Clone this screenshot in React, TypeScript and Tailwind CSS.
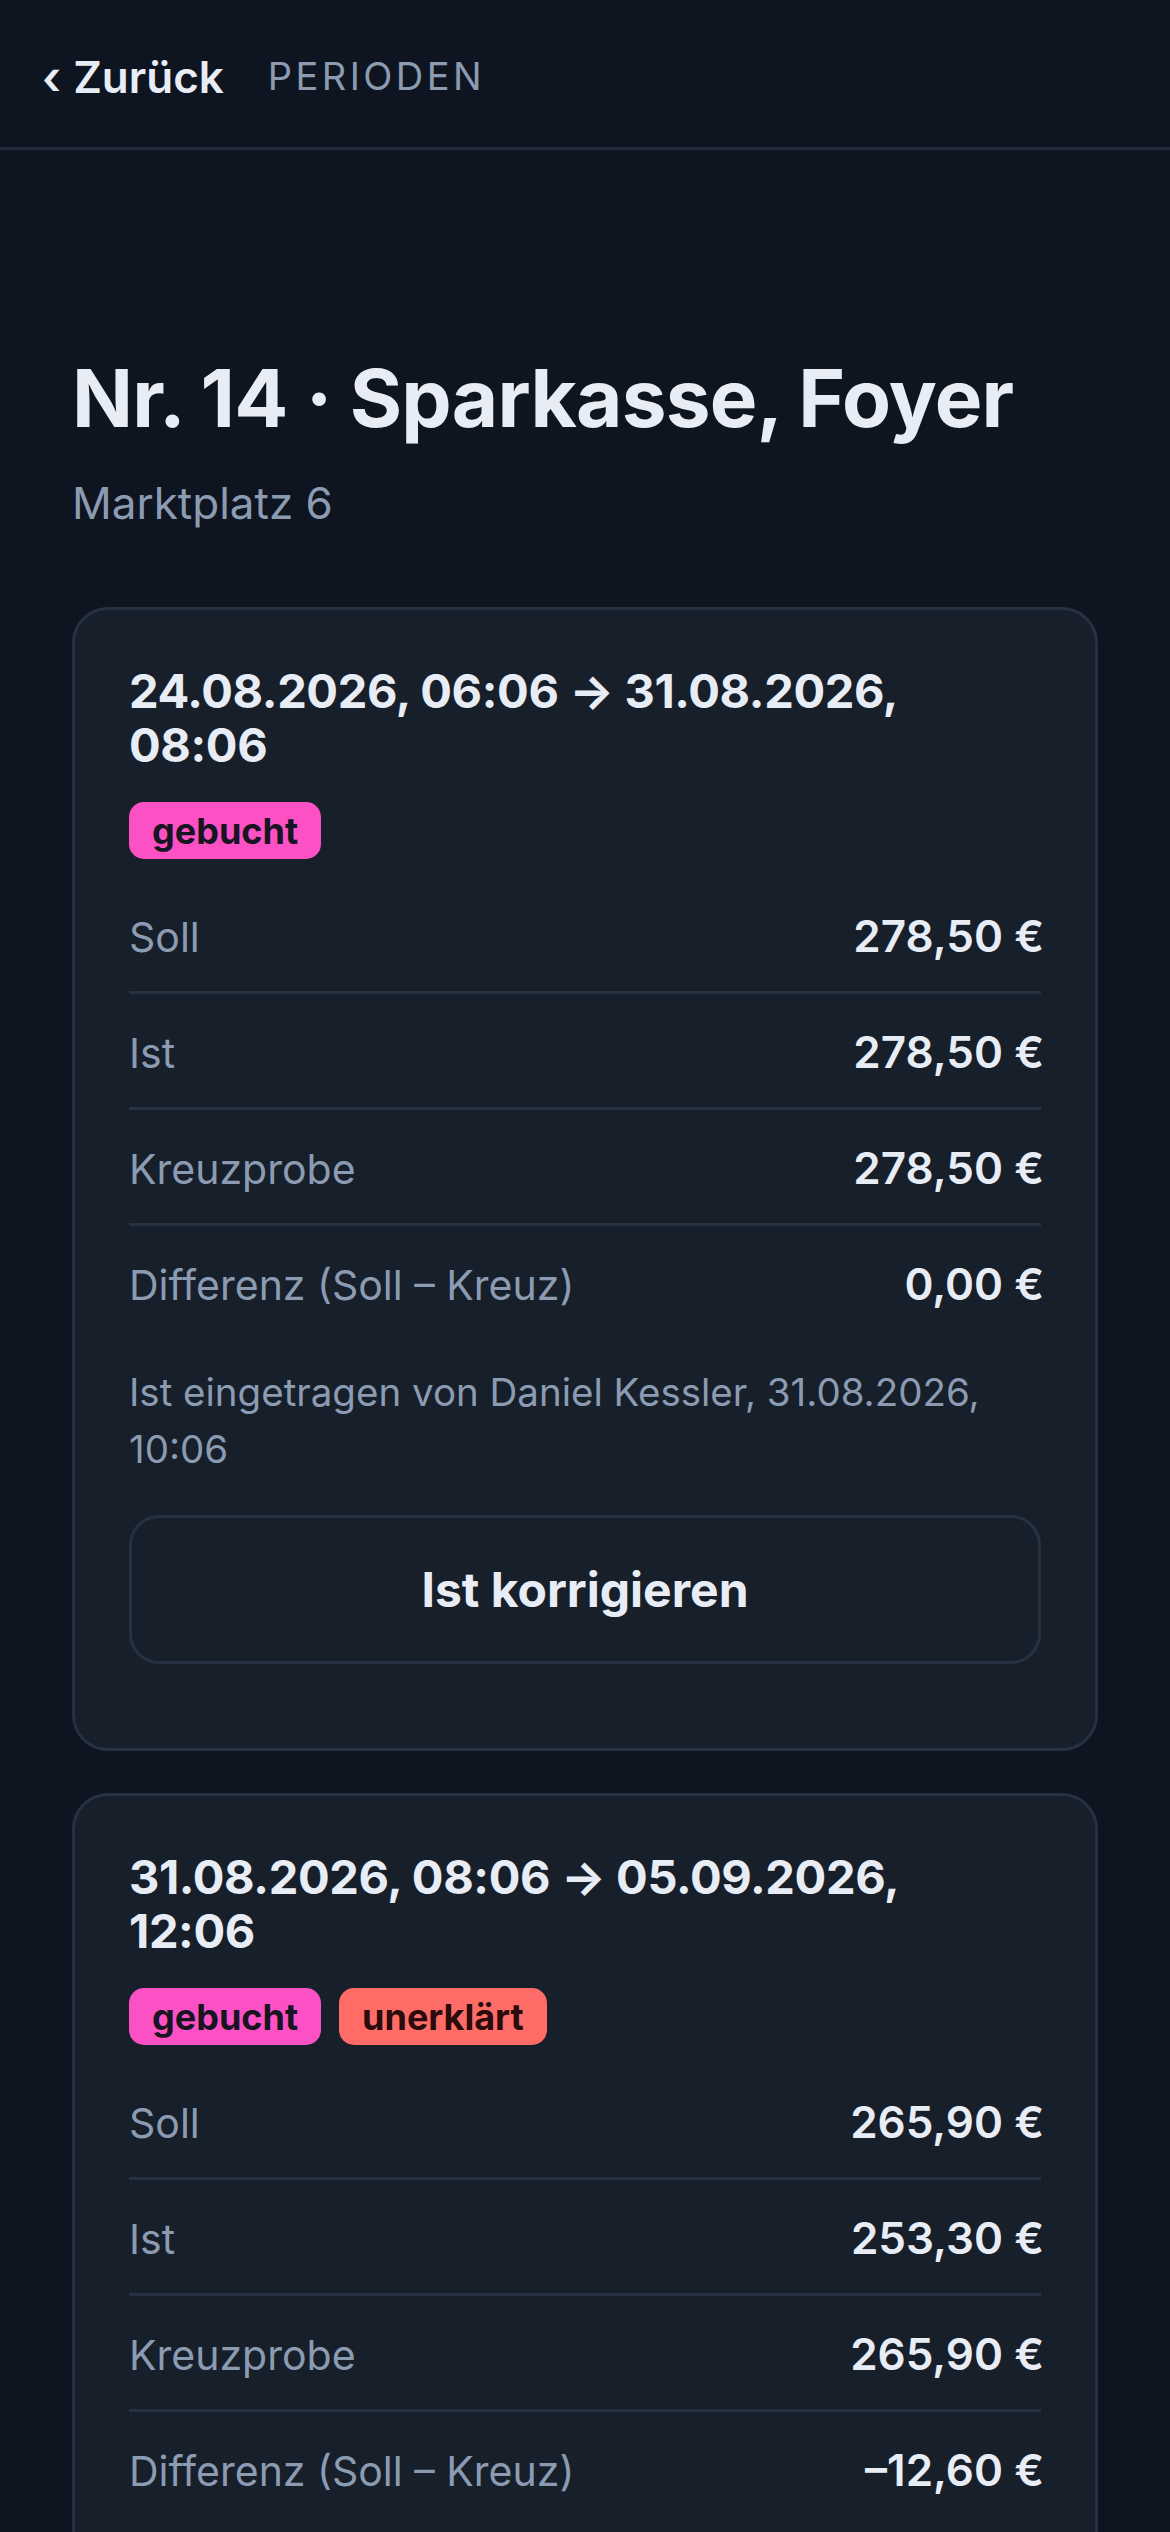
import React from "react";

type Row = { label: string; value: string };

function Badge({ kind, children }: { kind: "pink" | "red"; children: React.ReactNode }) {
  return (
    <span
      className={
        kind === "pink"
          ? "inline-flex h-[57px] items-center rounded-[15px] bg-[#fc50c5] px-[23px] text-[36px] font-bold text-[#181522]"
          : "inline-flex h-[57px] items-center rounded-[15px] bg-[#ff6b66] px-[23px] text-[36px] font-bold text-[#2a0c0c]"
      }
    >
      {children}
    </span>
  );
}

function Card({
  range,
  badges,
  rows,
  meta,
}: {
  range: string;
  badges: { kind: "pink" | "red"; text: string }[];
  rows: Row[];
  meta: string;
}) {
  return (
    <section className="rounded-[36px] border-[3px] border-[#263141] bg-[#171f2b] px-[54px] pt-[54px] pb-[54px]">
      <h2 className="max-w-[870px] text-[47px] font-bold leading-[54px] tracking-[-0.008em] text-[#e8edf5]">
        {range}
      </h2>
      <div className="mt-[30px] flex gap-[18px]">
        {badges.map((b) => (
          <Badge key={b.text} kind={b.kind}>
            {b.text}
          </Badge>
        ))}
      </div>
      <div className="mt-[19px]">
        {rows.map((r, i) => (
          <div
            key={r.label}
            className={
              i < rows.length - 1
                ? "flex items-baseline justify-between border-b-[3px] border-[#263141] pt-[33px] pb-[29px]"
                : "flex items-baseline justify-between pt-[33px] pb-[29px]"
            }
          >
            <span className="text-[41px] leading-[50px] text-[#8b9bb1]">{r.label}</span>
            <span className="-mr-[3px] text-[44px] font-semibold leading-[50px] text-[#e8edf5]">{r.value}</span>
          </div>
        ))}
      </div>
      <p className="mt-[25px] text-[38.5px] leading-[57px] text-[#8b9bb1]">{meta}</p>
      <button className="mt-[37px] mb-[30px] flex h-[149px] w-full items-center justify-center rounded-[30px] border-[3px] border-[#263141] bg-[#171f2b] text-[48px] font-bold text-[#e8edf5]">
        Ist korrigieren
      </button>
    </section>
  );
}

export default function App() {
  return (
    <div
      className="min-h-screen bg-[#0f1520] text-[#e8edf5]"
      style={{ fontFamily: "Inter, 'Noto Sans', sans-serif" }}
    >
      <header className="flex h-[150px] items-center gap-[44px] border-b-[3px] border-[#222d3b] pl-[42px] pt-[6px]">
        <div className="flex items-center gap-[12px] text-[44px] font-semibold text-[#e8edf5]">
          <span className="text-[46px] leading-none">‹</span>
          <span>Zurück</span>
        </div>
        <span className="text-[38px] tracking-[0.09em] text-[#8b9bb1]">PERIODEN</span>
      </header>
      <main className="px-[72px] pt-[204px] pb-[60px]">
        <h1 className="text-[80px] font-bold leading-[88px] tracking-[-0.01em] text-[#e8edf5]">
          Nr. 14 · Sparkasse, Foyer
        </h1>
        <p className="mt-[31px] text-[44px] leading-[60px] text-[#8b9bb1]">Marktplatz 6</p>
        <div className="mt-[74px] flex flex-col gap-[42px]">
          <Card
            range="24.08.2026, 06:06 → 31.08.2026, 08:06"
            badges={[{ kind: "pink", text: "gebucht" }]}
            rows={[
              { label: "Soll", value: "278,50 €" },
              { label: "Ist", value: "278,50 €" },
              { label: "Kreuzprobe", value: "278,50 €" },
              { label: "Differenz (Soll – Kreuz)", value: "0,00 €" },
            ]}
            meta="Ist eingetragen von Daniel Kessler, 31.08.2026, 10:06"
          />
          <Card
            range="31.08.2026, 08:06 → 05.09.2026, 12:06"
            badges={[
              { kind: "pink", text: "gebucht" },
              { kind: "red", text: "unerklärt" },
            ]}
            rows={[
              { label: "Soll", value: "265,90 €" },
              { label: "Ist", value: "253,30 €" },
              { label: "Kreuzprobe", value: "265,90 €" },
              { label: "Differenz (Soll – Kreuz)", value: "–12,60 €" },
            ]}
            meta="Ist eingetragen von Daniel Kessler, 05.09.2026, 14:06"
          />
        </div>
      </main>
    </div>
  );
}
